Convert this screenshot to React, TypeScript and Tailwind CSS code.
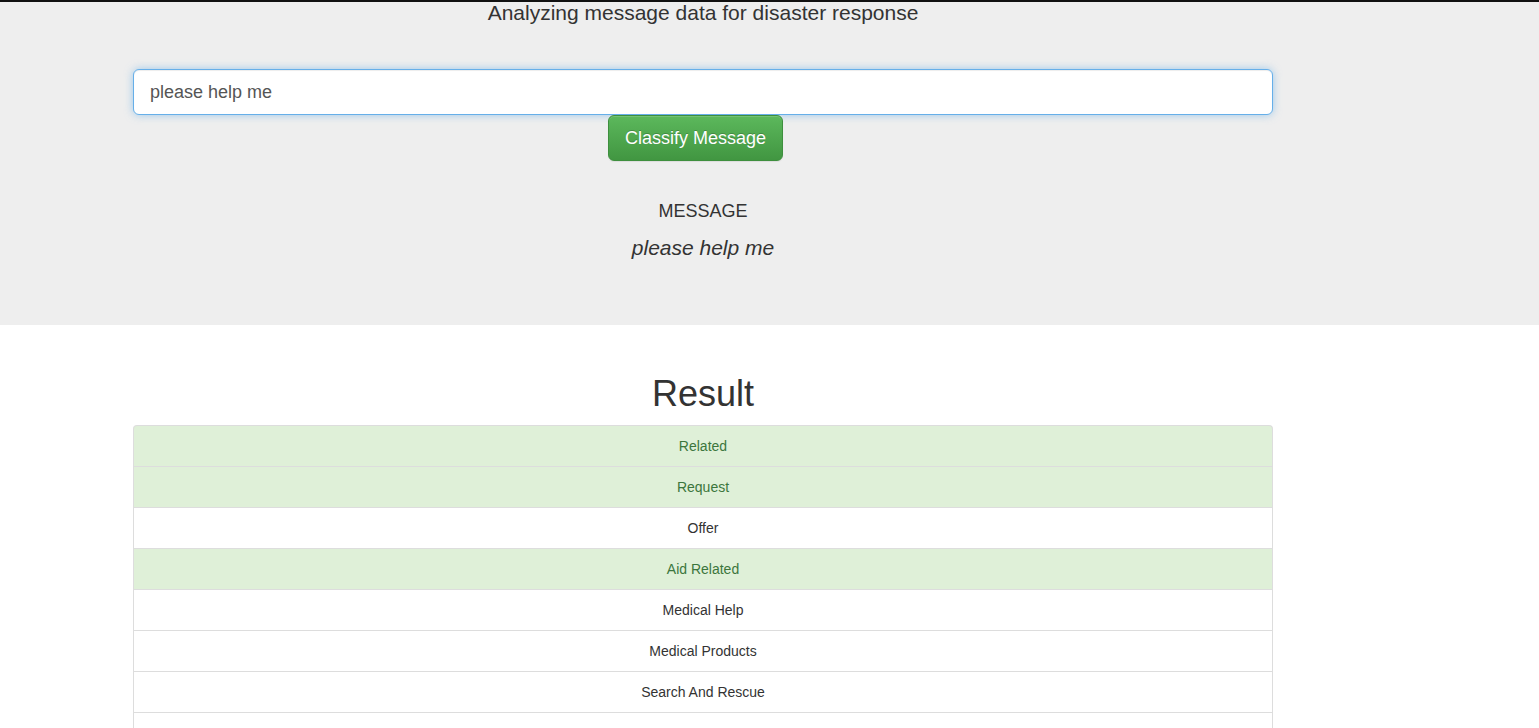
import React from "react";

const categories = [
  { name: "Related", hit: true },
  { name: "Request", hit: true },
  { name: "Offer", hit: false },
  { name: "Aid Related", hit: true },
  { name: "Medical Help", hit: false },
  { name: "Medical Products", hit: false },
  { name: "Search And Rescue", hit: false },
];

export default function App() {
  return (
    <div className="h-[728px] overflow-hidden bg-white font-['Liberation_Sans',Arial,sans-serif] text-[#333]">
      {/* Jumbotron */}
      <div className="h-[325px] border-t-2 border-[#111] bg-[#eee]">
        <div className="ml-[133px] w-[1140px]">
          <p className="text-center text-[21px] leading-[22px]">
            Analyzing message data for disaster response
          </p>

          <input
            type="text"
            defaultValue="please help me"
            className="mt-[45px] block h-[46px] w-full rounded-[6px] border border-[#66afe9] bg-white px-4 text-[18px] text-[#555] shadow-[inset_0_1px_1px_rgba(0,0,0,0.075),0_0_8px_rgba(102,175,233,0.6)] outline-none"
          />

          <button className="ml-[475px] block h-[46px] w-[175px] rounded-[6px] border border-[#3e8f3e] bg-gradient-to-b from-[#5cb85c] to-[#419641] text-[18px] text-white shadow-[inset_0_1px_0_rgba(255,255,255,0.15),0_1px_1px_rgba(0,0,0,0.075)] [text-shadow:0_-1px_0_rgba(0,0,0,0.2)]">
            Classify Message
          </button>

          <h4 className="mt-[40px] text-center text-[18px] leading-[20px] uppercase">
            Message
          </h4>
          <p className="mt-[12px] text-center text-[21px] italic leading-[30px]">
            please help me
          </p>
        </div>
      </div>

      {/* Result */}
      <div className="ml-[133px] w-[1140px]">
        <h1 className="mt-[49px] text-center text-[36px] leading-[40px]">Result</h1>
        <ul className="mt-[11px]">
          {categories.map((c, i) => (
            <li
              key={c.name}
              className={`h-[41px] border-x border-t border-[#ddd] text-center text-[14px] leading-[40px] ${
                i === 0 ? "rounded-t-[4px]" : ""
              } ${c.hit ? "bg-[#dff0d8] text-[#3c763d]" : "bg-white text-[#333]"}`}
            >
              {c.name}
            </li>
          ))}
          {/* next row, scrolled below the fold */}
          <li className="h-[41px] border-x border-t border-[#ddd] bg-white" />
        </ul>
      </div>
    </div>
  );
}
